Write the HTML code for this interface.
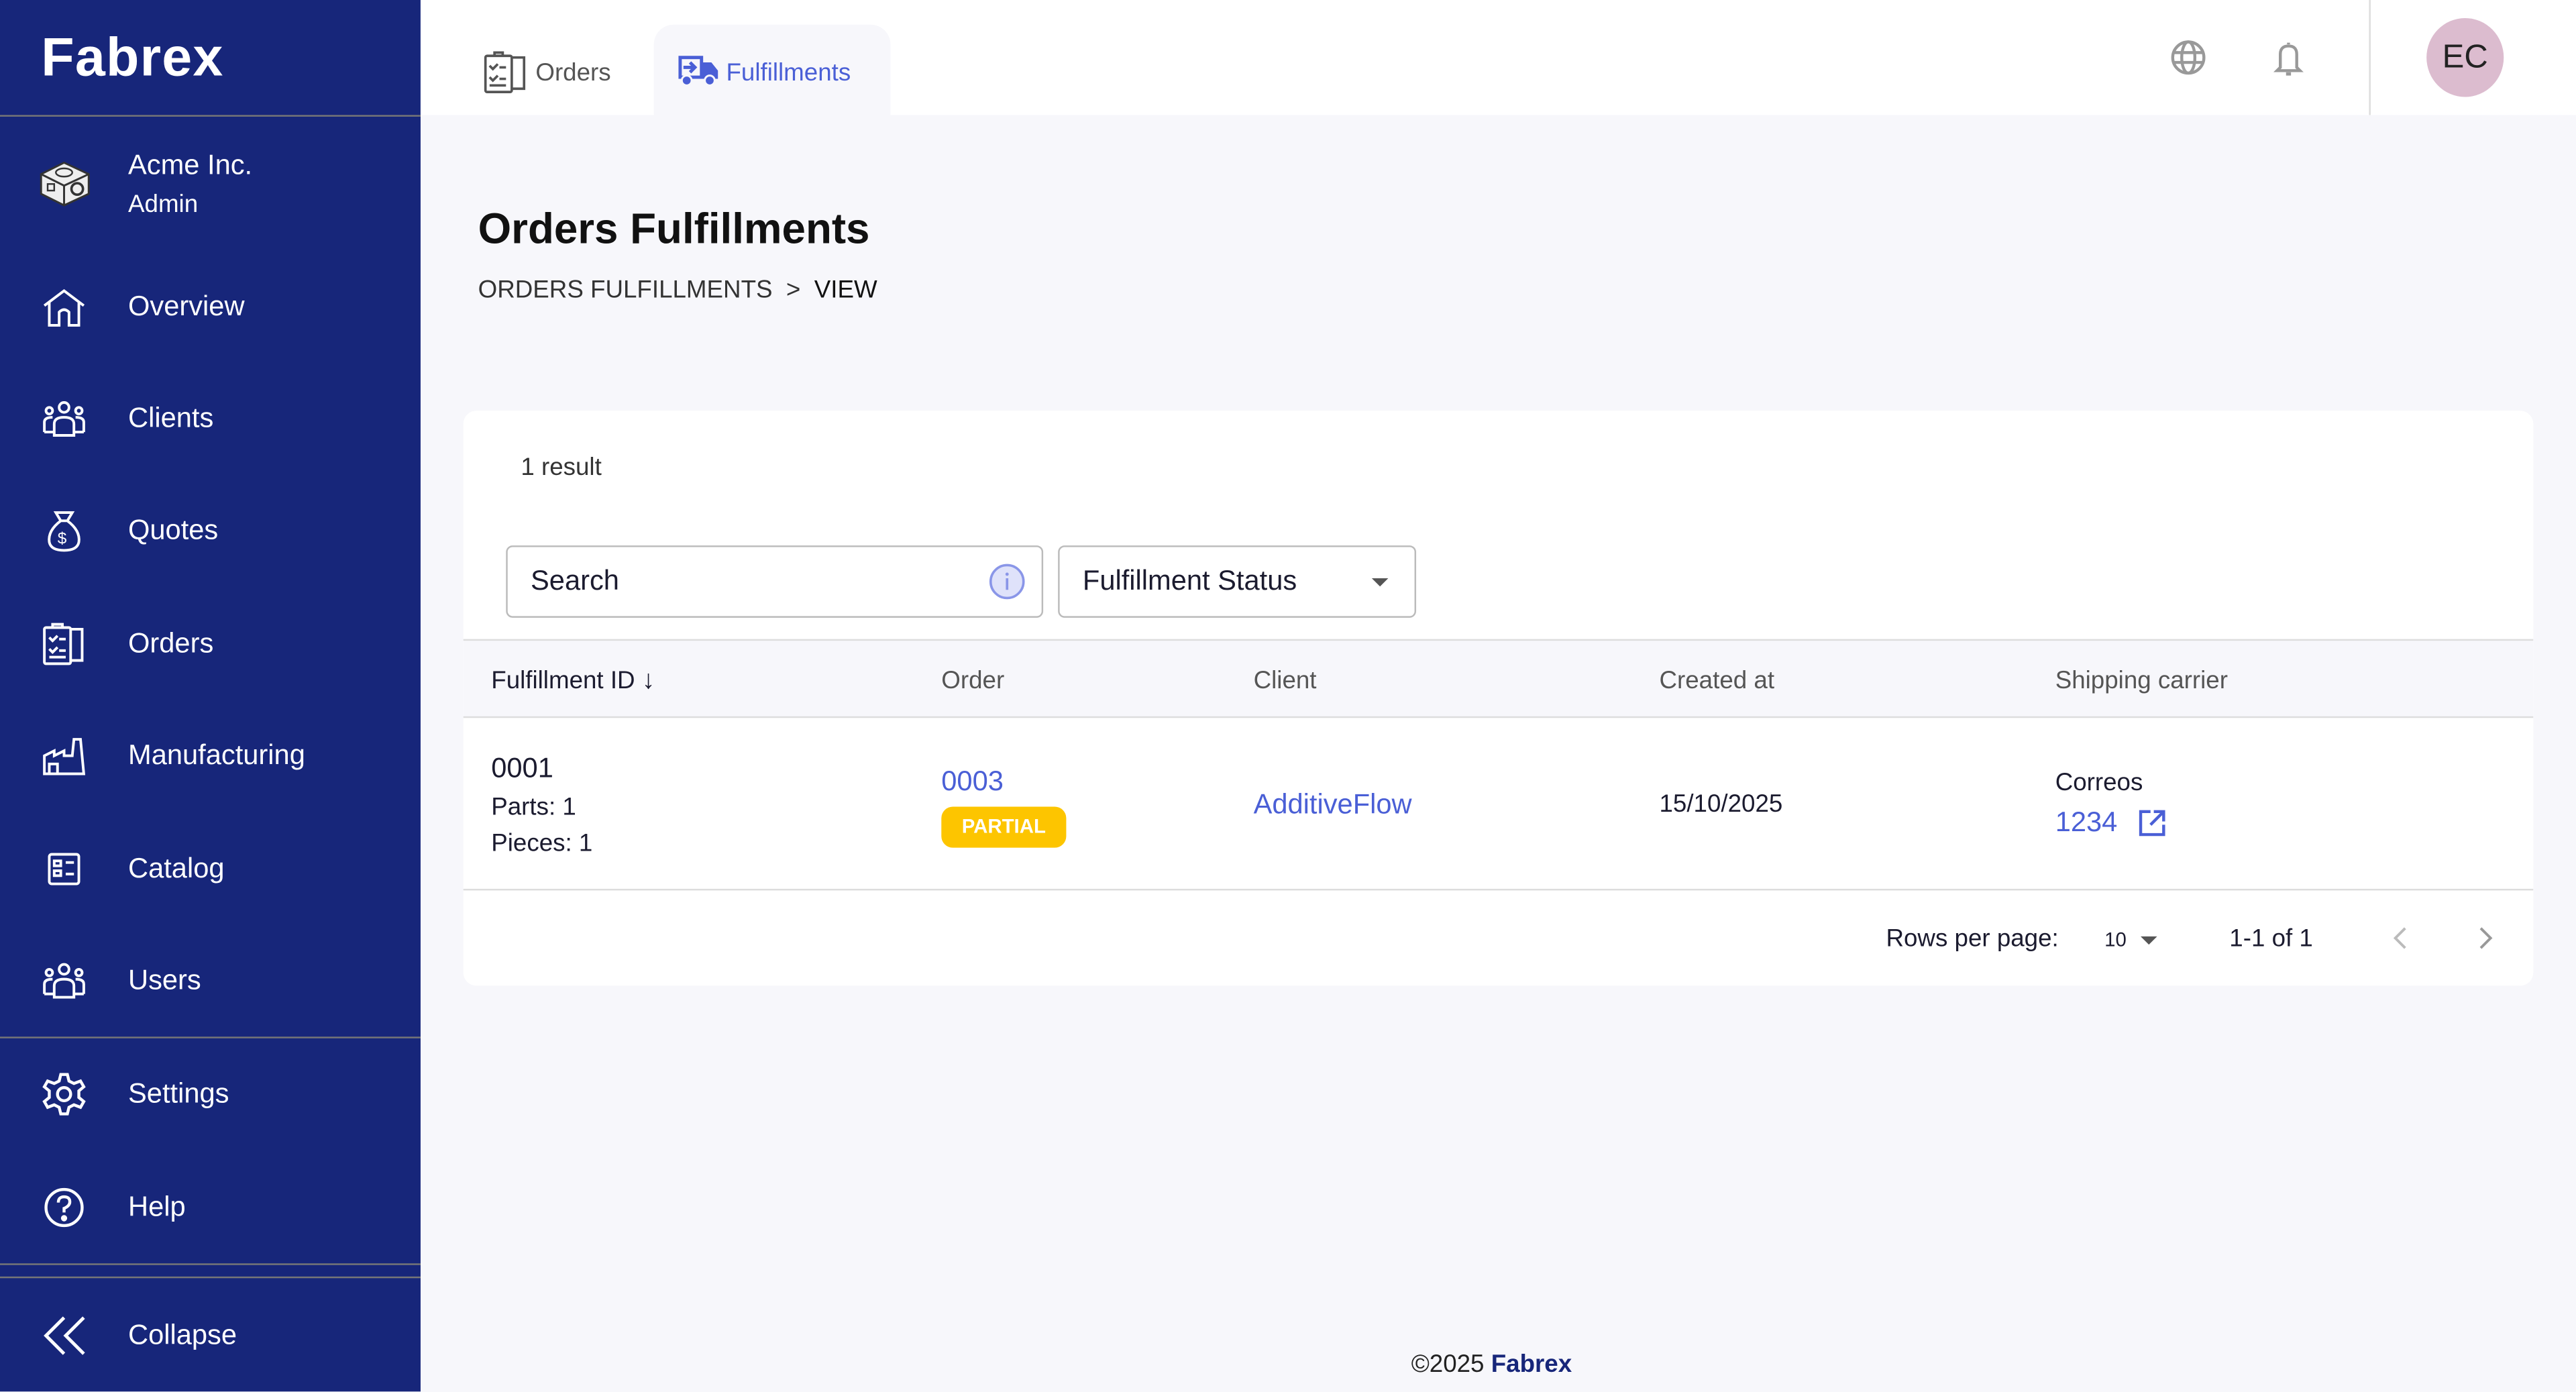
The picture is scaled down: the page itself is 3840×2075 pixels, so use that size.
<!DOCTYPE html>
<html><head><meta charset="utf-8"><style>
*{box-sizing:border-box;margin:0;padding:0}
html,body{width:3840px;height:2075px;overflow:hidden;background:#f7f7fb}
#w{position:absolute;left:0;top:0;width:1568px;height:847px;transform:scale(2.449);transform-origin:0 0;font-family:"Liberation Sans",sans-serif;color:#1b1b2f;background:#f7f7fb}
.a{position:absolute;white-space:nowrap}
#sb{position:absolute;left:0;top:0;width:256px;height:847px;background:#17267a;color:#fff}
.hr{position:absolute;left:0;width:256px;height:1px;background:#777}
.nv{position:absolute;left:78px;font-size:17px;color:#fff;transform:translateY(-50%)}
.ic{position:absolute;left:25px;width:28px;height:28px;transform:translateY(-50%)}
#top{position:absolute;left:256px;top:0;width:1312px;height:70px;background:#fff}
th,td{text-align:left}
</style></head><body><div id="w">
<div id="sb">
 <div class="a" style="left:25px;top:16px;font-size:33px;font-weight:bold;letter-spacing:0.5px">Fabrex</div>
 <div class="hr" style="top:70px"></div>
 <svg class="a" style="left:22px;top:94px" width="35" height="35" viewBox="0 0 35 35"><path d="M3 12 L17 5 L32 12 L32 24 L17 31 L3 24Z" fill="#eee" stroke="#333" stroke-width="1.2"/><path d="M3 12 L17 19 L32 12 M17 19 V31" fill="none" stroke="#333" stroke-width="1.2"/><ellipse cx="17" cy="11" rx="5" ry="2.5" fill="none" stroke="#333"/><circle cx="25" cy="21" r="3.5" fill="none" stroke="#333" stroke-width="1.5"/><rect x="7" y="18" width="4" height="4" fill="none" stroke="#333"/></svg>
 <div class="a" style="left:78px;top:91px;font-size:17px">Acme Inc.</div>
 <div class="a" style="left:78px;top:116px;font-size:15px">Admin</div>
 <svg class="ic" style="top:187px" viewBox="0 0 28 28" fill="none" stroke="#fff" stroke-width="1.6"><path d="M2 13 L14 4 L26 13 M5 11 V25 H11 V17 Q14 14 17 17 V25 H23 V11"/></svg>
 <div class="nv" style="top:187px">Overview</div>
 <svg class="ic" style="top:255px" viewBox="0 0 28 28" fill="none" stroke="#fff" stroke-width="1.6"><circle cx="14" cy="7" r="3"/><circle cx="5" cy="9" r="2"/><circle cx="23" cy="9" r="2"/><path d="M8 24 V17 Q8 13 14 13 Q20 13 20 17 V24Z M2 22 V16 Q2 13 7 13 M26 22 V16 Q26 13 21 13 M2 22 H8 M20 22 H26"/></svg>
 <div class="nv" style="top:255px">Clients</div>
 <svg class="ic" style="top:323px" viewBox="0 0 28 28" fill="none" stroke="#fff" stroke-width="1.6"><path d="M9 3 H19 L16 8 H12Z M12 8 Q4 14 5 21 Q6 26 14 26 Q22 26 23 21 Q24 14 16 8"/><text x="10" y="22" font-size="10" fill="#fff" stroke="none" font-family="Liberation Sans">$</text></svg>
 <div class="nv" style="top:323px">Quotes</div>
 <svg class="ic" style="top:392px" viewBox="0 0 28 28" fill="none" stroke="#fff" stroke-width="1.6"><rect x="2" y="4" width="16" height="22" rx="1"/><path d="M18 5 H25 V24 H18 M7 4 V2 H13 V4 M5 10 L7 12 L10 9 M11 11 H15 M5 17 L7 19 L10 16 M11 18 H15 M5 22 H15"/></svg>
 <div class="nv" style="top:392px">Orders</div>
 <svg class="ic" style="top:460px" viewBox="0 0 28 28" fill="none" stroke="#fff" stroke-width="1.6"><path d="M2 25 V14 L8 11 V14 L14 11 V14 H19 L20 4 H24 L26 25Z M5 25 V19 H10 V25"/></svg>
 <div class="nv" style="top:460px">Manufacturing</div>
 <svg class="ic" style="top:529px" viewBox="0 0 28 28" fill="none" stroke="#fff" stroke-width="1.6"><rect x="5" y="5" width="18" height="18" rx="1.5"/><rect x="8" y="9" width="4" height="3"/><rect x="8" y="15" width="4" height="3"/><path d="M15 10 H20 M15 17 H20"/></svg>
 <div class="nv" style="top:529px">Catalog</div>
 <svg class="ic" style="top:597px" viewBox="0 0 28 28" fill="none" stroke="#fff" stroke-width="1.6"><circle cx="14" cy="7" r="3"/><circle cx="5" cy="9" r="2"/><circle cx="23" cy="9" r="2"/><path d="M8 24 V17 Q8 13 14 13 Q20 13 20 17 V24Z M2 22 V16 Q2 13 7 13 M26 22 V16 Q26 13 21 13 M2 22 H8 M20 22 H26"/></svg>
 <div class="nv" style="top:597px">Users</div>
 <div class="hr" style="top:631px"></div>
 <svg class="ic" style="top:666px" viewBox="0 0 28 28" fill="none" stroke="#fff" stroke-width="1.8"><path d="M12 2 H16 L17 6 L20 7.5 L24 6 L26 9.5 L23 12 V16 L26 18.5 L24 22 L20 20.5 L17 22 L16 26 H12 L11 22 L8 20.5 L4 22 L2 18.5 L5 16 V12 L2 9.5 L4 6 L8 7.5 L11 6Z"/><circle cx="14" cy="14" r="4"/></svg>
 <div class="nv" style="top:666px">Settings</div>
 <svg class="ic" style="top:735px" viewBox="0 0 28 28" fill="none" stroke="#fff" stroke-width="1.8"><circle cx="14" cy="14" r="11"/><path d="M10.5 11 Q10.5 7.5 14 7.5 Q17.5 7.5 17.5 10.5 Q17.5 13 14 14.5 V17"/><circle cx="14" cy="20.5" r="1" fill="#fff"/></svg>
 <div class="nv" style="top:735px">Help</div>
 <div class="hr" style="top:769px"></div>
 <div class="hr" style="top:777px"></div>
 <svg class="ic" style="top:813px" viewBox="0 0 28 28" fill="none" stroke="#fff" stroke-width="2"><path d="M14 3 L3 14 L14 25 M26 3 L15 14 L26 25"/></svg>
 <div class="nv" style="top:813px">Collapse</div>
</div>
<div id="top">
 <div class="a" style="left:142px;top:15px;width:144px;height:55px;background:#f7f7fb;border-radius:12px 12px 0 0"></div>
 <svg class="a" style="left:38px;top:30px" width="28" height="28" viewBox="0 0 28 28" fill="none" stroke="#555" stroke-width="1.5"><rect x="1.5" y="4" width="16" height="22" rx="1"/><path d="M17.5 5 H25 V24 H17.5 M7 4 V2 H12 V4 M4 10 L6 12 L9 9 M10 11 H14 M4 17 L6 19 L9 16 M10 18 H14 M4 22 H14"/></svg>
 <div class="a" style="left:70px;top:36px;font-size:15px;color:#555">Orders</div>
 <svg class="a" style="left:156px;top:32px" width="26" height="22" viewBox="0 0 26 22"><path d="M1 2 H16 V16 H1Z M16 6 H21 L25 11 V16 H16Z" fill="#4a5fd6"/><rect x="3" y="4" width="11" height="10" fill="#f7f7fb"/><path d="M4 9 H10 M8 6 L11 9 L8 12" stroke="#4a5fd6" stroke-width="2" fill="none"/><circle cx="6" cy="17" r="3" fill="#4a5fd6" stroke="#f7f7fb" stroke-width="1.2"/><circle cx="20" cy="17" r="3" fill="#4a5fd6" stroke="#f7f7fb" stroke-width="1.2"/></svg>
 <div class="a" style="left:186px;top:36px;font-size:15px;color:#4a5fd6">Fulfillments</div>
 <svg class="a" style="left:1065px;top:24px" width="22" height="22" viewBox="0 0 22 22" fill="none" stroke="#999" stroke-width="1.8"><circle cx="11" cy="11" r="9.5"/><ellipse cx="11" cy="11" rx="4" ry="9.5"/><path d="M2 8 H20 M2 14 H20"/></svg>
 <svg class="a" style="left:1127px;top:24px" width="20" height="24" viewBox="0 0 20 24" fill="none" stroke="#999" stroke-width="1.8"><path d="M10 2 V3 M5 17 V9 Q5 4 10 4 Q15 4 15 9 V17 L17 19 H3Z"/><path d="M8.5 21 H11.5" stroke-width="2"/></svg>
 <div class="a" style="left:1186px;top:0;width:1px;height:70px;background:#ddd"></div>
 <div class="a" style="left:1221px;top:11px;width:47px;height:48px;border-radius:50%;background:#dcbccf;font-size:20px;text-align:center;line-height:48px;color:#222">EC</div>
</div>
<div class="a" style="left:291px;top:124px;font-size:26px;font-weight:bold;color:#111">Orders Fulfillments</div>
<div class="a" style="left:291px;top:168px;font-size:15px;color:#333">ORDERS FULFILLMENTS &nbsp;&gt;&nbsp; <span style="color:#111">VIEW</span></div>
<div class="a" style="left:282px;top:250px;width:1260px;height:350px;background:#fff;border-radius:8px;overflow:hidden">
 <div class="a" style="left:35px;top:26px;font-size:15px;color:#333">1 result</div>
 <div class="a" style="left:26px;top:82px;width:327px;height:44px;border:1px solid #bbb;border-radius:4px"></div>
 <div class="a" style="left:41px;top:94px;font-size:17px">Search</div>
 <svg class="a" style="left:320px;top:93px" width="22" height="22" viewBox="0 0 22 22"><circle cx="11" cy="11" r="10" fill="#dfe2fa" stroke="#8a96e8" stroke-width="1.5"/><path d="M11 9 V16" stroke="#8a96e8" stroke-width="1.5"/><circle cx="11" cy="6.5" r="1" fill="#8a96e8"/></svg>
 <div class="a" style="left:362px;top:82px;width:218px;height:44px;border:1px solid #bbb;border-radius:4px"></div>
 <div class="a" style="left:377px;top:94px;font-size:17px">Fulfillment Status</div>
 <div class="a" style="left:553px;top:102px;width:0;height:0;border-left:5px solid transparent;border-right:5px solid transparent;border-top:5px solid #555"></div>
 <div class="a" style="left:0;top:139px;width:1260px;height:48px;background:#f7f7fb;border-top:1px solid #ddd;border-bottom:1px solid #ddd"></div>
 <div class="a" style="left:17px;top:156px;font-size:15px;color:#1b1b2f">Fulfillment ID <span style="font-size:16px">&#8595;</span></div>
 <div class="a" style="left:291px;top:156px;font-size:15px;color:#555">Order</div>
 <div class="a" style="left:481px;top:156px;font-size:15px;color:#555">Client</div>
 <div class="a" style="left:728px;top:156px;font-size:15px;color:#555">Created at</div>
 <div class="a" style="left:969px;top:156px;font-size:15px;color:#555">Shipping carrier</div>
 <div class="a" style="left:17px;top:208px;font-size:17px">0001</div>
 <div class="a" style="left:17px;top:233px;font-size:15px">Parts: 1</div>
 <div class="a" style="left:17px;top:255px;font-size:15px">Pieces: 1</div>
 <div class="a" style="left:291px;top:216px;font-size:17px;color:#4a5fd6">0003</div>
 <div class="a" style="left:291px;top:241px;width:76px;height:25px;border-radius:7px;background:#fdc500;color:#fff;font-size:12px;font-weight:bold;text-align:center;line-height:25px">PARTIAL</div>
 <div class="a" style="left:481px;top:230px;font-size:17px;color:#4a5fd6">AdditiveFlow</div>
 <div class="a" style="left:728px;top:231px;font-size:15px">15/10/2025</div>
 <div class="a" style="left:969px;top:218px;font-size:15px">Correos</div>
 <div class="a" style="left:969px;top:241px;font-size:17px;color:#4a5fd6">1234</div>
 <svg class="a" style="left:1019px;top:242px" width="18" height="18" viewBox="0 0 18 18" fill="none" stroke="#4a5fd6" stroke-width="1.8"><path d="M8 2 H2 V16 H16 V10 M10 2 H16 V8 M16 2 L8 10"/></svg>
 <div class="a" style="left:0;top:291px;width:1260px;height:1px;background:#ddd"></div>
 <div class="a" style="left:866px;top:313px;font-size:15px">Rows per page:</div>
 <div class="a" style="left:999px;top:315px;font-size:12px">10</div>
 <div class="a" style="left:1021px;top:320px;width:0;height:0;border-left:5px solid transparent;border-right:5px solid transparent;border-top:5px solid #555"></div>
 <div class="a" style="left:1075px;top:313px;font-size:15px">1-1 of 1</div>
 <svg class="a" style="left:1173px;top:313px" width="12" height="16" viewBox="0 0 12 16" fill="none" stroke="#bbb" stroke-width="1.6"><path d="M9 2 L3 8 L9 14"/></svg>
 <svg class="a" style="left:1225px;top:313px" width="12" height="16" viewBox="0 0 12 16" fill="none" stroke="#999" stroke-width="1.6"><path d="M3 2 L9 8 L3 14"/></svg>
</div>
<div class="a" style="left:859px;top:822px;font-size:15px;color:#222">©2025 <b style="color:#17267a">Fabrex</b></div>
</div></body></html>
